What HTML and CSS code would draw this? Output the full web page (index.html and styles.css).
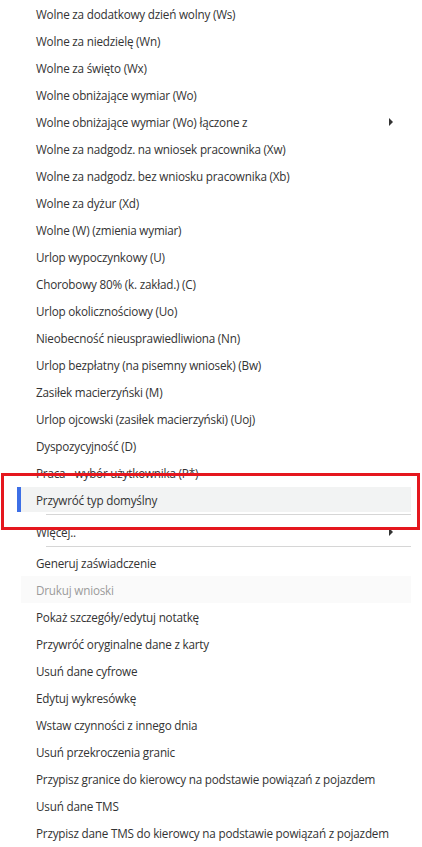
FILE: index.html
```html
<!DOCTYPE html>
<html lang="pl">
<head>
<meta charset="utf-8">
<title>Menu</title>
<link rel="stylesheet" href="styles.css">
</head>
<body>
<div class="menu">
  <div class="item">Wolne za dodatkowy dzień wolny (Ws)</div>
  <div class="item">Wolne za niedzielę (Wn)</div>
  <div class="item">Wolne za święto (Wx)</div>
  <div class="item">Wolne obniżające wymiar (Wo)</div>
  <div class="item sub">Wolne obniżające wymiar (Wo) łączone z<span class="arrow"></span></div>
  <div class="item">Wolne za nadgodz. na wniosek pracownika (Xw)</div>
  <div class="item">Wolne za nadgodz. bez wniosku pracownika (Xb)</div>
  <div class="item">Wolne za dyżur (Xd)</div>
  <div class="item">Wolne (W) (zmienia wymiar)</div>
  <div class="item">Urlop wypoczynkowy (U)</div>
  <div class="item">Chorobowy 80% (k. zakład.) (C)</div>
  <div class="item">Urlop okolicznościowy (Uo)</div>
  <div class="item">Nieobecność nieusprawiedliwiona (Nn)</div>
  <div class="item">Urlop bezpłatny (na pisemny wniosek) (Bw)</div>
  <div class="item">Zasiłek macierzyński (M)</div>
  <div class="item">Urlop ojcowski (zasiłek macierzyński) (Uoj)</div>
  <div class="item">Dyspozycyjność (D)</div>
  <div class="item">Praca - wybór użytkownika (P*)</div>
  <div class="item active"><span class="label">Przywróć typ domyślny</span></div>
  <div class="sep sep-a"></div>
  <div class="item sub">Więcej..<span class="arrow"></span></div>
  <div class="sep sep-b"></div>
  <div class="item">Generuj zaświadczenie</div>
  <div class="item disabled">Drukuj wnioski</div>
  <div class="item">Pokaż szczegóły/edytuj notatkę</div>
  <div class="item">Przywróć oryginalne dane z karty</div>
  <div class="item">Usuń dane cyfrowe</div>
  <div class="item">Edytuj wykresówkę</div>
  <div class="item">Wstaw czynności z innego dnia</div>
  <div class="item">Usuń przekroczenia granic</div>
  <div class="item">Przypisz granice do kierowcy na podstawie powiązań z pojazdem</div>
  <div class="item">Usuń dane TMS</div>
  <div class="item">Przypisz dane TMS do kierowcy na podstawie powiązań z pojazdem</div>
  <div class="annotation"></div>
</div>
</body>
</html>
```
FILE: styles.css
```css
html, body {
  margin: 0;
  padding: 0;
  background: #ffffff;
}
body {
  font-family: "Open Sans", "Noto Sans", sans-serif;
  font-size: 11.7px;
  letter-spacing: -0.2px;
  color: #333333;
  width: 422px;
  height: 847px;
  overflow: hidden;
}
.menu {
  position: relative;
  display: flex;
  flex-direction: column;
  padding-left: 21px;
  width: 390px;
}
.item {
  height: 27px;
  display: flex;
  align-items: center;
  padding-left: 15px;
  white-space: nowrap;
  position: relative;
}
.item.sub {
  justify-content: space-between;
  padding-right: 18px;
}
.arrow {
  width: 0;
  height: 0;
  border-top: 4px solid transparent;
  border-bottom: 4px solid transparent;
  border-left: 4px solid #333333;
}
.item.active {
  height: 25px;
  margin: 1px 0;
  background: #f2f3f3;
}
.item.active::before {
  content: "";
  position: absolute;
  left: -4px;
  top: 0;
  width: 4px;
  height: 25px;
  background: #3d6fe6;
}
.item.disabled {
  background: #fafafa;
  color: #9a9a9a;
}
.sep {
  height: 1px;
  background: #d6d6d6;
  margin-left: 25px;
}
.sep-a {
  margin-top: 1px;
  margin-bottom: 3px;
}
.sep-b {
  margin-top: 1px;
  margin-bottom: 2px;
}
.annotation {
  position: absolute;
  left: 1px;
  top: 473px;
  width: 413px;
  height: 51px;
  border: 3px solid #e5171e;
  pointer-events: none;
}
```
